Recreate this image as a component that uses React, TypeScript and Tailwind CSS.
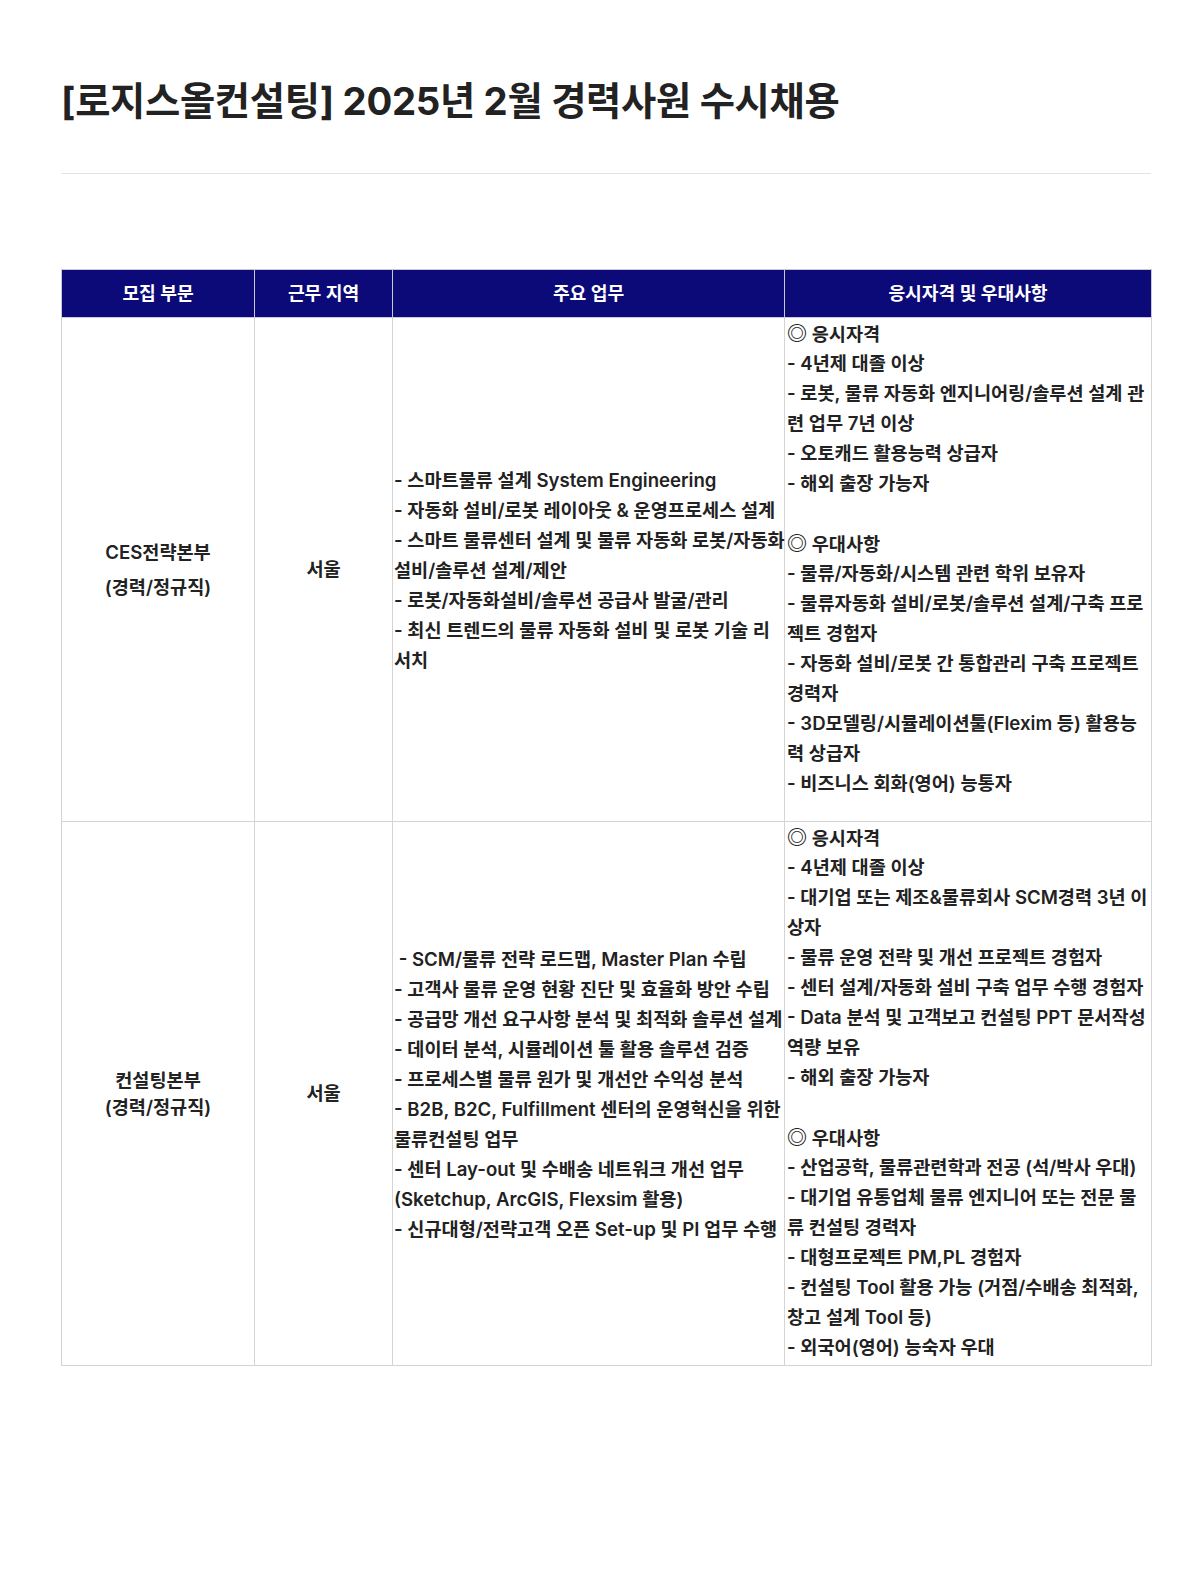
const font = { fontFamily: '"Inter", "Noto Sans CJK KR", sans-serif' };

type Row = {
  dept: string[];
  region: string;
  duties: string[];
  quals: string[];
  extraBottom: string;
};

const rows: Row[] = [
  {
    dept: ["CES전략본부", "(경력/정규직)"],
    region: "서울",
    duties: [
      "- 스마트물류 설계 System Engineering",
      "- 자동화 설비/로봇 레이아웃 & 운영프로세스 설계",
      "- 스마트 물류센터 설계 및 물류 자동화 로봇/자동화",
      "설비/솔루션 설계/제안",
      "- 로봇/자동화설비/솔루션 공급사 발굴/관리",
      "- 최신 트렌드의 물류 자동화 설비 및 로봇 기술 리",
      "서치",
    ],
    quals: [
      "◎ 응시자격",
      "- 4년제 대졸 이상",
      "- 로봇, 물류 자동화 엔지니어링/솔루션 설계 관",
      "련 업무 7년 이상",
      "- 오토캐드 활용능력 상급자",
      "- 해외 출장 가능자",
      "",
      "◎ 우대사항",
      "- 물류/자동화/시스템 관련 학위 보유자",
      "- 물류자동화 설비/로봇/솔루션 설계/구축 프로",
      "젝트 경험자",
      "- 자동화 설비/로봇 간 통합관리 구축 프로젝트",
      "경력자",
      "- 3D모델링/시뮬레이션툴(Flexim 등) 활용능",
      "력 상급자",
      "- 비즈니스 회화(영어) 능통자",
    ],
    extraBottom: "pb-[23px]",
  },
  {
    dept: ["컨설팅본부", "(경력/정규직)"],
    region: "서울",
    duties: [
      "\u00a0- SCM/물류 전략 로드맵, Master Plan 수립",
      "- 고객사 물류 운영 현황 진단 및 효율화 방안 수립",
      "- 공급망 개선 요구사항 분석 및 최적화 솔루션 설계",
      "- 데이터 분석, 시뮬레이션 툴 활용 솔루션 검증",
      "- 프로세스별 물류 원가 및 개선안 수익성 분석",
      "- B2B, B2C, Fulfillment 센터의 운영혁신을 위한",
      "물류컨설팅 업무",
      "- 센터 Lay-out 및 수배송 네트워크 개선 업무",
      "(Sketchup, ArcGIS, Flexsim 활용)",
      "- 신규대형/전략고객 오픈 Set-up 및 PI 업무 수행",
    ],
    quals: [
      "◎ 응시자격",
      "- 4년제 대졸 이상",
      "- 대기업 또는 제조&물류회사 SCM경력 3년 이",
      "상자",
      "- 물류 운영 전략 및 개선 프로젝트 경험자",
      "- 센터 설계/자동화 설비 구축 업무 수행 경험자",
      "- Data 분석 및 고객보고 컨설팅 PPT 문서작성",
      "역량 보유",
      "- 해외 출장 가능자",
      "",
      "◎ 우대사항",
      "- 산업공학, 물류관련학과 전공 (석/박사 우대)",
      "- 대기업 유통업체 물류 엔지니어 또는 전문 물",
      "류 컨설팅 경력자",
      "- 대형프로젝트 PM,PL 경험자",
      "- 컨설팅 Tool 활용 가능 (거점/수배송 최적화,",
      "창고 설계 Tool 등)",
      "- 외국어(영어) 능숙자 우대",
    ],
    extraBottom: "pb-[3px]",
  },
];

const Line = ({ text }: { text: string }) => {
  if (text.startsWith("◎")) {
    return (
      <div className="whitespace-nowrap h-[30px] leading-[30px]">
        <span
          className="font-black text-[20px] leading-[30px]"
          style={{ fontFamily: '"Noto Sans CJK KR", sans-serif' }}
        >
          ◎
        </span>
        {text.slice(1)}
      </div>
    );
  }
  return (
    <div className="whitespace-nowrap h-[30px] leading-[30px]">
      {text || "\u00a0"}
    </div>
  );
};

const App = () => {
  return (
    <div className="bg-white text-[#222] pb-[180px]" style={font}>
      <div className="ml-[61px] w-[1090px] pt-[77px]">
        <h1 className="text-[38.3px] font-bold leading-[49px] tracking-[-0.3px] text-[#222]">
          [로지스올컨설팅] 2025년 2월 경력사원 수시채용
        </h1>
        <div className="mt-[47px] border-t border-[#e3e3e3]" />

        <table className="mt-[95px] w-full table-fixed border-collapse text-[18.6px] font-semibold">
          <colgroup>
            <col className="w-[193px]" />
            <col className="w-[138px]" />
            <col className="w-[392px]" />
            <col className="w-[367px]" />
          </colgroup>
          <thead>
            <tr className="h-[48px] bg-[#0c0a78] text-white">
              {["모집 부문", "근무 지역", "주요 업무", "응시자격 및 우대사항"].map((h) => (
                <th
                  key={h}
                  className="border border-[#c9c9d6] text-center text-[18.2px] font-bold"
                >
                  {h}
                </th>
              ))}
            </tr>
          </thead>
          <tbody>
            {rows.map((r, i) => (
              <tr key={i}>
                <td className="border border-[#d4d4d4] text-center align-middle">
                  <div className={i === 0 ? "leading-[35px]" : "leading-[26.5px]"}>
                    {r.dept.map((d) => (
                      <div key={d}>{d}</div>
                    ))}
                  </div>
                </td>
                <td className="border border-[#d4d4d4] text-center align-middle">
                  {r.region}
                </td>
                <td className="border border-[#d4d4d4] align-middle pl-px">
                  {r.duties.map((l, j) => (
                    <Line key={j} text={l} />
                  ))}
                </td>
                <td className={`border border-[#d4d4d4] align-top pl-[2px] ${r.extraBottom}`}>
                  {r.quals.map((l, j) => (
                    <Line key={j} text={l} />
                  ))}
                </td>
              </tr>
            ))}
          </tbody>
        </table>
      </div>
    </div>
  );
};

export default App;
